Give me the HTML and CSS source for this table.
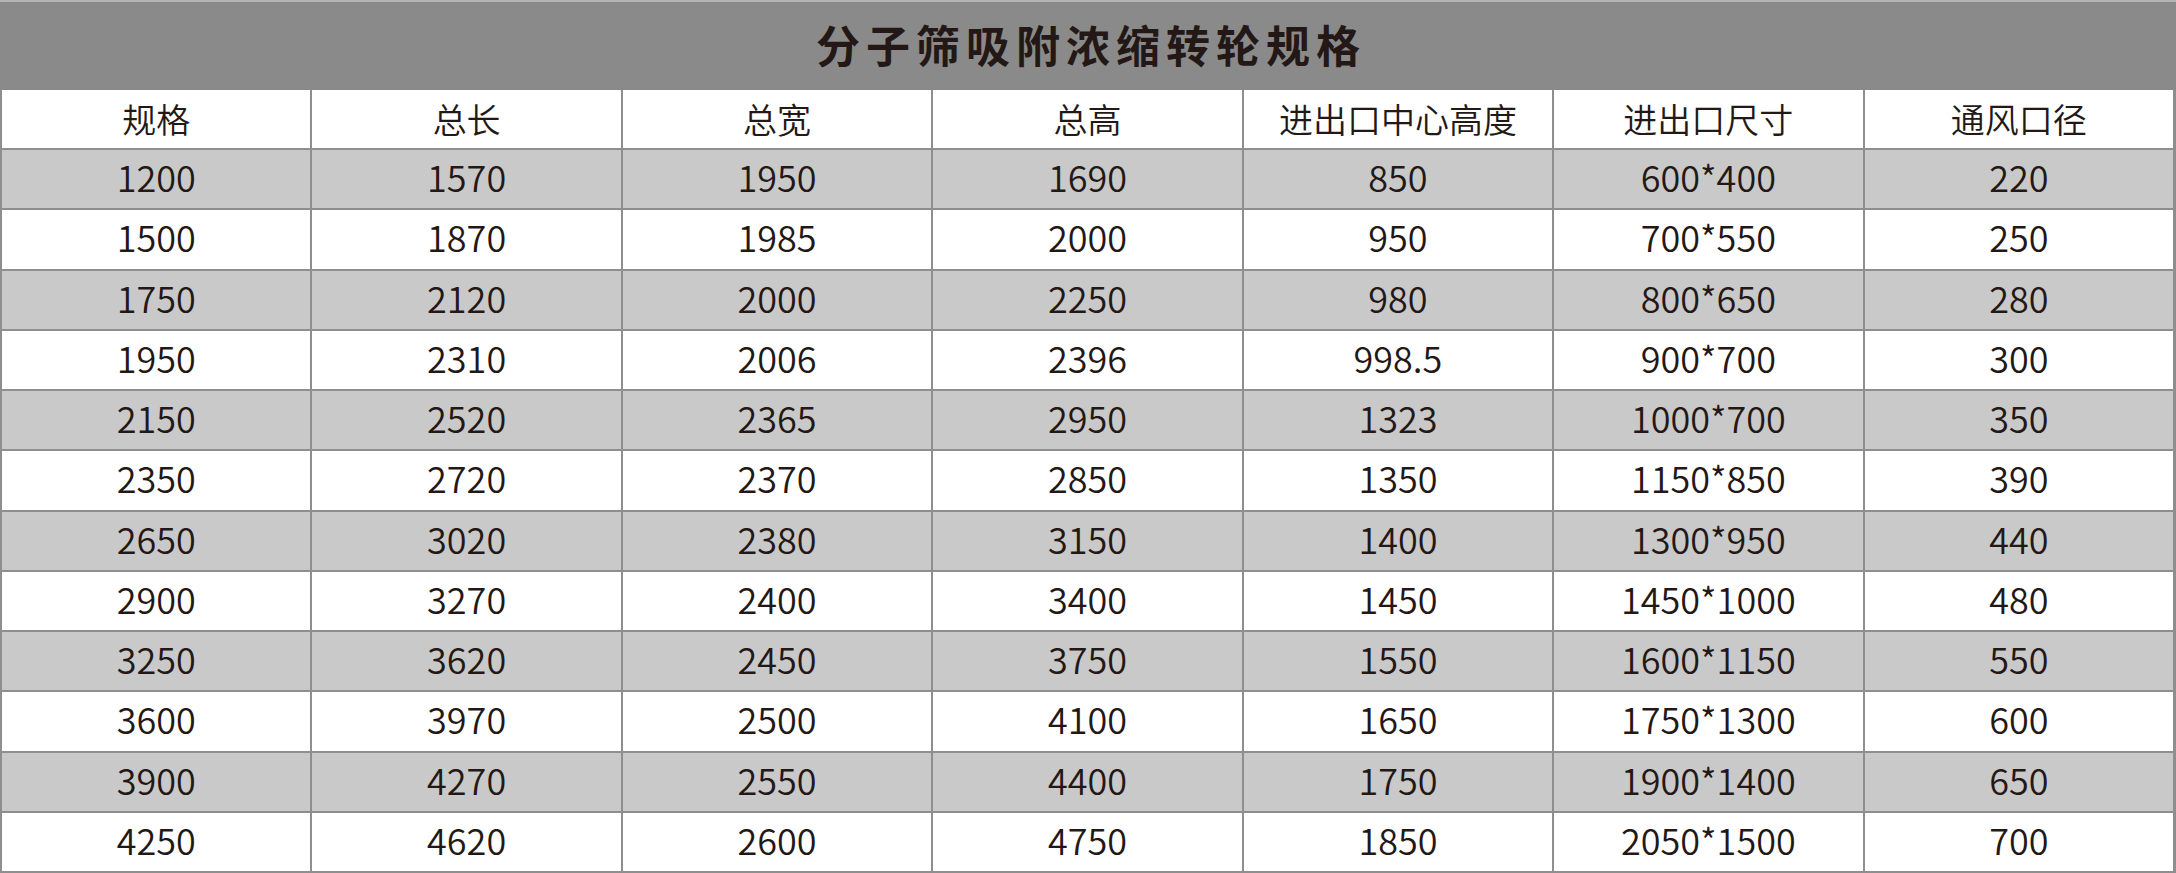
FILE: index.html
```html
<!DOCTYPE html>
<html lang="zh-CN">
<head>
<meta charset="utf-8">
<title>分子筛吸附浓缩转轮规格</title>
<link rel="stylesheet" href="styles.css">
</head>
<body>
<div class="sheet">
  <div class="title">分子筛吸附浓缩转轮规格</div>
  <div class="grid">
    <div class="cell head">规格</div><div class="cell head">总长</div><div class="cell head">总宽</div><div class="cell head">总高</div><div class="cell head">进出口中心高度</div><div class="cell head">进出口尺寸</div><div class="cell head">通风口径</div>

    <div class="cell shade">1200</div><div class="cell shade">1570</div><div class="cell shade">1950</div><div class="cell shade">1690</div><div class="cell shade">850</div><div class="cell shade">600*400</div><div class="cell shade">220</div>
    <div class="cell">1500</div><div class="cell">1870</div><div class="cell">1985</div><div class="cell">2000</div><div class="cell">950</div><div class="cell">700*550</div><div class="cell">250</div>
    <div class="cell shade">1750</div><div class="cell shade">2120</div><div class="cell shade">2000</div><div class="cell shade">2250</div><div class="cell shade">980</div><div class="cell shade">800*650</div><div class="cell shade">280</div>
    <div class="cell">1950</div><div class="cell">2310</div><div class="cell">2006</div><div class="cell">2396</div><div class="cell">998.5</div><div class="cell">900*700</div><div class="cell">300</div>
    <div class="cell shade">2150</div><div class="cell shade">2520</div><div class="cell shade">2365</div><div class="cell shade">2950</div><div class="cell shade">1323</div><div class="cell shade">1000*700</div><div class="cell shade">350</div>
    <div class="cell">2350</div><div class="cell">2720</div><div class="cell">2370</div><div class="cell">2850</div><div class="cell">1350</div><div class="cell">1150*850</div><div class="cell">390</div>
    <div class="cell shade">2650</div><div class="cell shade">3020</div><div class="cell shade">2380</div><div class="cell shade">3150</div><div class="cell shade">1400</div><div class="cell shade">1300*950</div><div class="cell shade">440</div>
    <div class="cell">2900</div><div class="cell">3270</div><div class="cell">2400</div><div class="cell">3400</div><div class="cell">1450</div><div class="cell">1450*1000</div><div class="cell">480</div>
    <div class="cell shade">3250</div><div class="cell shade">3620</div><div class="cell shade">2450</div><div class="cell shade">3750</div><div class="cell shade">1550</div><div class="cell shade">1600*1150</div><div class="cell shade">550</div>
    <div class="cell">3600</div><div class="cell">3970</div><div class="cell">2500</div><div class="cell">4100</div><div class="cell">1650</div><div class="cell">1750*1300</div><div class="cell">600</div>
    <div class="cell shade">3900</div><div class="cell shade">4270</div><div class="cell shade">2550</div><div class="cell shade">4400</div><div class="cell shade">1750</div><div class="cell shade">1900*1400</div><div class="cell shade">650</div>
    <div class="cell">4250</div><div class="cell">4620</div><div class="cell">2600</div><div class="cell">4750</div><div class="cell">1850</div><div class="cell">2050*1500</div><div class="cell">700</div>
  </div>
</div>
</body>
</html>
```

FILE: styles.css
```css
html, body {
  margin: 0;
  padding: 0;
  background: #ffffff;
}

.sheet {
  width: 2176px;
  font-family: "Noto Sans CJK SC", "Noto Sans", sans-serif;
  color: #231815;
}

.title {
  box-sizing: border-box;
  height: 90px;
  background: #8a8a8a;
  border-top: 2px solid #b4b4b4;
  display: flex;
  align-items: center;
  justify-content: center;
  font-size: 44px;
  font-weight: 700;
  letter-spacing: 6px;
  padding-left: 6px;
  padding-bottom: 5px;
  color: #231815;
}

.grid {
  display: grid;
  grid-template-columns: repeat(7, 1fr);
  grid-template-rows: 60px;
  grid-auto-rows: 60.25px;
  border-left: 2px solid #8e8e8e;
  border-right: 1px solid #8e8e8e;
}

.cell {
  box-sizing: border-box;
  border-right: 2px solid #8e8e8e;
  border-bottom: 2px solid #8e8e8e;
  background: #ffffff;
  display: flex;
  align-items: center;
  justify-content: center;
  font-size: 36px;
  font-weight: 350;
  line-height: 1;
  padding-bottom: 6px;
}

.cell.head {
  font-size: 34px;
  padding-bottom: 1px;
}

.cell.shade {
  background: #c9c9c9;
}
```
